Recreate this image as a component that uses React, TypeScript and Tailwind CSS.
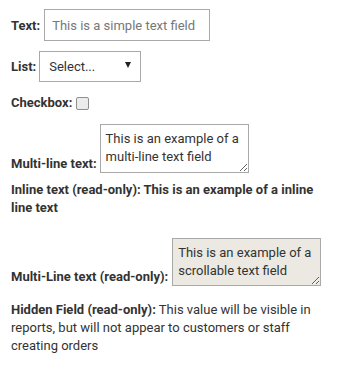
import React from 'react';

function Label({ children }: { children: React.ReactNode }) {
  return <label className="font-bold mr-1">{children}</label>;
}

export default function App() {
  return (
    <div className="min-h-[371px] bg-white px-[11px] pt-[9px] font-['Roboto',sans-serif] text-[13px] leading-[18px] text-[#333]">
      <div className="mb-[10px]">
        <Label>Text:</Label>
        <input
          type="text"
          placeholder="This is a simple text field"
          className="w-[166px] h-[32px] border border-[#a9a9a9] px-[7px] text-[13px] placeholder:text-[#777] align-baseline"
        />
      </div>

      <div className="mb-[12px]">
        <Label>List:</Label>
        <span className="relative inline-block -ml-[1px]">
          <select className="appearance-none w-[102px] h-[31px] border border-[#a9a9a9] bg-white pl-[9px] pr-6 text-[13px] text-[#333]">
            <option>Select...</option>
          </select>
          <span className="pointer-events-none absolute right-[10px] top-[11px] w-0 h-0 border-l-[3.5px] border-r-[3.5px] border-t-[6px] border-l-transparent border-r-transparent border-t-[#222]" />
        </span>
      </div>

      <div className="mb-[12px] flex items-center">
        <Label>Checkbox:</Label>
        <input
          type="checkbox"
          className="appearance-none w-[13px] h-[13px] border border-[#8f8f8f] rounded-[2px] bg-[#ececec]"
        />
      </div>

      <div className="mb-[8px]">
        <Label>Multi-line text:</Label>
        <textarea
          defaultValue="This is an example of a multi-line text field"
          className="-ml-[1px] w-[149px] h-[49px] border border-[#a9a9a9] px-[5px] pt-[5px] text-[13px] leading-[18px] resize-y overflow-hidden align-bottom"
        />
      </div>

      <div className="mb-[21px] font-bold">
        Inline text (read-only): This is an example of a inline line text
      </div>

      <div className="mb-[15px]">
        <Label>Multi-Line text (read-only):</Label>
        <textarea
          readOnly
          defaultValue="This is an example of a scrollable text field"
          className="w-[149px] h-[48px] border border-[#a9a9a9] bg-[#ebe9e1] px-[5px] pt-[5px] text-[13px] leading-[18px] overflow-hidden align-bottom"
        />
      </div>

      <div>
        <span className="font-bold">Hidden Field (read-only):</span> This value will be visible in reports, but will not appear to customers or staff creating orders
      </div>
    </div>
  );
}
